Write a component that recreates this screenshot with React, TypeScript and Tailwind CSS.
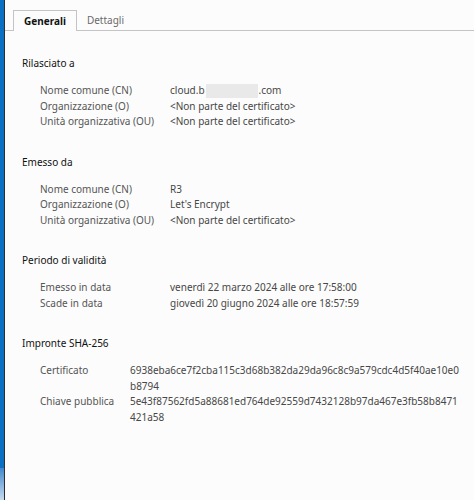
type Row = { label: string; value: React.ReactNode }

type Section = { title: string; labelWidth: string; rows: Row[] }

const sections: Section[] = [
  {
    title: 'Rilasciato a',
    labelWidth: 'w-[130px]',
    rows: [
      {
        label: 'Nome comune (CN)',
        value: (
          <span className="inline-flex items-center">
            cloud.b
            <span aria-hidden className="mx-px inline-block h-[14px] w-[52px] bg-[#e9e9e9]" />
            .com
          </span>
        ),
      },
      { label: 'Organizzazione (O)', value: '<Non parte del certificato>' },
      { label: 'Unità organizzativa (OU)', value: '<Non parte del certificato>' },
    ],
  },
  {
    title: 'Emesso da',
    labelWidth: 'w-[130px]',
    rows: [
      { label: 'Nome comune (CN)', value: 'R3' },
      { label: 'Organizzazione (O)', value: "Let's Encrypt" },
      { label: 'Unità organizzativa (OU)', value: '<Non parte del certificato>' },
    ],
  },
  {
    title: 'Periodo di validità',
    labelWidth: 'w-[130px]',
    rows: [
      { label: 'Emesso in data', value: 'venerdì 22 marzo 2024 alle ore 17:58:00' },
      { label: 'Scade in data', value: 'giovedì 20 giugno 2024 alle ore 18:57:59' },
    ],
  },
  {
    title: 'Impronte SHA-256',
    labelWidth: 'w-[90px]',
    rows: [
      {
        label: 'Certificato',
        value: (
          <>
            <span className="block">6938eba6ce7f2cba115c3d68b382da29da96c8c9a579cdc4d5f40ae10e0</span>
            <span className="block">b8794</span>
          </>
        ),
      },
      {
        label: 'Chiave pubblica',
        value: (
          <>
            <span className="block">5e43f87562fd5a88681ed764de92559d7432128b97da467e3fb58b8471</span>
            <span className="block">421a58</span>
          </>
        ),
      },
    ],
  },
]

function Tabs() {
  return (
    <div className="flex h-[31px] items-end border-b border-[#c4c4c4] pl-[8px]">
      <div className="-mb-px flex h-[21px] items-center border border-b-0 border-[#c4c4c4] bg-[#fcfcfc] px-[10px] pt-px font-bold text-[#111]">
        Generali
      </div>
      <div className="flex h-[20px] items-center px-[10px] pt-px text-[#6a6a6a]">Dettagli</div>
    </div>
  )
}

export default function App() {
  return (
    <div
      className="flex h-[500px] w-[474px] overflow-hidden bg-[#fcfcfc] text-[10px] leading-[15.5px]"
      style={{ fontFamily: '"Noto Sans", "Open Sans", sans-serif' }}
    >
      <div className="flex w-[4px] flex-none flex-col">
        <div className="flex-1 bg-[#0b70c2]" />
        <div className="h-[32px] bg-gradient-to-b from-[#3f88cc] to-[#c6dbee]" />
      </div>
      <div className="w-px flex-none bg-[#2e2e2e]" />
      <div className="min-w-0 flex-1">
        <Tabs />
        <div className="flex flex-col gap-[25px] pl-[17px] pt-[25px]">
          {sections.map((s) => (
            <section key={s.title}>
              <h2 className="text-[#111]">{s.title}</h2>
              <div className="mt-[11.5px] flex flex-col pl-[18px]">
                {s.rows.map((r) => (
                  <div key={r.label} className="flex">
                    <div className={`${s.labelWidth} flex-none text-[#555]`}>{r.label}</div>
                    <div className="whitespace-nowrap text-[#474747]">{r.value}</div>
                  </div>
                ))}
              </div>
            </section>
          ))}
        </div>
      </div>
    </div>
  )
}
